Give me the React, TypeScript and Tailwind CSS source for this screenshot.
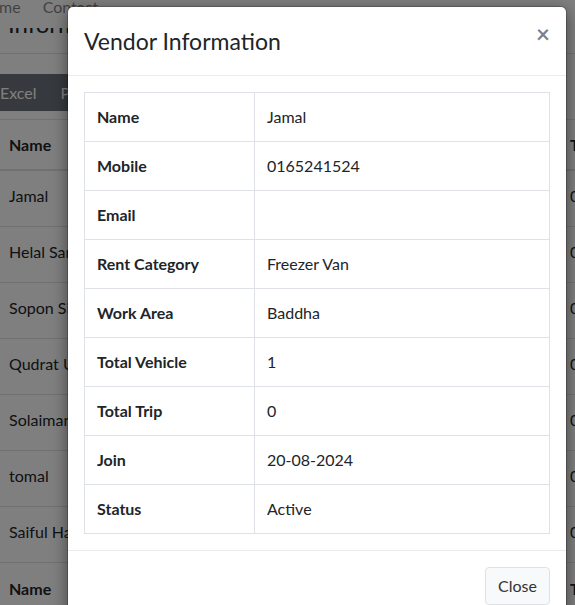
import React from "react";

const vendors = [
  { name: "Jamal", mobile: "0165241524" },
  { name: "Helal Sarker", mobile: "0171234567" },
  { name: "Sopon Sikder", mobile: "0181122334" },
  { name: "Qudrat Ullah", mobile: "0191234567" },
  { name: "Solaiman", mobile: "0161234567" },
  { name: "tomal", mobile: "0151234567" },
  { name: "Saiful Haque", mobile: "0171112223" },
];

const details = [
  { label: "Name", value: "Jamal" },
  { label: "Mobile", value: "0165241524" },
  { label: "Email", value: "" },
  { label: "Rent Category", value: "Freezer Van" },
  { label: "Work Area", value: "Baddha" },
  { label: "Total Vehicle", value: "1" },
  { label: "Total Trip", value: "0" },
  { label: "Join", value: "20-08-2024" },
  { label: "Status", value: "Active" },
];

export default function App() {
  return (
    <div className="relative h-[605px] w-[575px] overflow-hidden bg-white font-['Lato',sans-serif] text-[16px] text-[#212529]">
      {/* page behind the modal */}
      <nav className="-ml-[22px] -mt-[5px] flex h-6 items-center gap-[22px] leading-6 text-black/50">
        <span>Home</span>
        <span>Contact</span>
      </nav>
      <div className="mt-[9px] h-[7px] overflow-hidden">
        <h1 className="relative -top-[16px] -ml-[74px] whitespace-nowrap text-[24px] leading-[24px]">Vendor Information</h1>
      </div>
      <div className="mt-[18px] h-px bg-[#dee2e6]"></div>

      <div className="-ml-[12px] mt-[20px] flex h-[37px] w-fit">
        <button className="bg-[#6c757d] px-3 leading-[37px] text-white">Excel</button>
        <button className="bg-[#6c757d] px-3 leading-[37px] text-white">PDF</button>
        <button className="bg-[#6c757d] px-3 leading-[37px] text-white">Print</button>
      </div>

      <div className="-ml-[3px] mt-[8px] w-[640px] border-t border-[#dee2e6]">
        <div className="grid h-[51px] grid-cols-[561px_1fr] items-center border-b-2 border-[#dee2e6] font-bold">
          <div className="px-3">Name</div>
          <div className="px-3">Total</div>
        </div>
        {vendors.map((v) => (
          <div key={v.name} className="grid h-[56px] grid-cols-[561px_1fr] items-center border-b border-[#dee2e6] pb-[5px]">
            <div className="whitespace-nowrap px-3">{v.name}</div>
            <div className="px-3">{v.mobile}</div>
          </div>
        ))}
        <div className="grid h-[56px] grid-cols-[561px_1fr] items-center pb-[5px] font-bold">
          <div className="px-3">Name</div>
          <div className="px-3">Total</div>
        </div>
      </div>

      {/* backdrop */}
      <div className="absolute inset-0 bg-black/50"></div>

      {/* modal */}
      <div className="absolute left-[68px] top-[7px] w-[498px] rounded-[5px] bg-white shadow-[0_4px_16px_rgba(0,0,0,0.5)] ring-1 ring-black/20">
        <div className="flex h-[69px] items-start justify-between border-b border-[#e9ecef] p-4">
          <h5 className="text-[23px] leading-[36px] font-normal">Vendor Information</h5>
          <button className="-mt-[4px] text-[24px] font-bold leading-[30px] text-black/50">×</button>
        </div>

        <div className="p-4">
          <table className="w-full border-collapse border border-[#dee2e6]">
            <tbody>
              {details.map((d) => (
                <tr key={d.label}>
                  <th className="h-[49px] w-[170px] border border-[#dee2e6] px-3 text-left font-bold leading-6">{d.label}</th>
                  <td className="h-[49px] border border-[#dee2e6] px-3 leading-6">{d.value}</td>
                </tr>
              ))}
            </tbody>
          </table>
        </div>

        <div className="flex justify-end border-t border-[#e9ecef] p-4">
          <button className="rounded-[4px] border border-[#dee2e6] bg-[#f8f9fa] px-3 py-1.5 leading-6 text-[#333]">Close</button>
        </div>
      </div>
    </div>
  );
}
